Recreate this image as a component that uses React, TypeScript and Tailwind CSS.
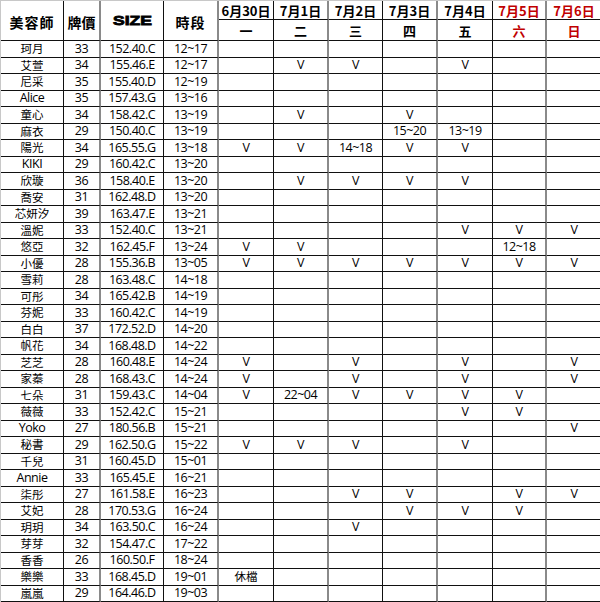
import React from "react";

type Row = [string, string, string, string, string[]];

const V = "V";
const rows: Row[] = [
  ["珂月", "33", "152.40.C", "12~17", ["", "", "", "", "", "", ""]],
  ["艾萱", "34", "155.46.E", "12~17", ["", V, V, "", V, "", ""]],
  ["尼采", "35", "155.40.D", "12~19", ["", "", "", "", "", "", ""]],
  ["Alice", "35", "157.43.G", "13~16", ["", "", "", "", "", "", ""]],
  ["童心", "34", "158.42.C", "13~19", ["", V, "", V, "", "", ""]],
  ["麻衣", "29", "150.40.C", "13~19", ["", "", "", "15~20", "13~19", "", ""]],
  ["陽光", "34", "165.55.G", "13~18", [V, V, "14~18", V, V, "", ""]],
  ["KIKI", "29", "160.42.C", "13~20", ["", "", "", "", "", "", ""]],
  ["欣璇", "36", "158.40.E", "13~20", ["", V, V, V, V, "", ""]],
  ["喬安", "31", "162.48.D", "13~20", ["", "", "", "", "", "", ""]],
  ["芯妍汐", "39", "163.47.E", "13~21", ["", "", "", "", "", "", ""]],
  ["溫妮", "33", "152.40.C", "13~21", ["", "", "", "", V, V, V]],
  ["悠亞", "32", "162.45.F", "13~24", [V, V, "", "", "", "12~18", ""]],
  ["小優", "28", "155.36.B", "13~05", [V, V, V, V, V, V, V]],
  ["雪莉", "28", "163.48.C", "14~18", ["", "", "", "", "", "", ""]],
  ["可彤", "34", "165.42.B", "14~19", ["", "", "", "", "", "", ""]],
  ["芬妮", "33", "160.42.C", "14~19", ["", "", "", "", "", "", ""]],
  ["白白", "37", "172.52.D", "14~20", ["", "", "", "", "", "", ""]],
  ["帆花", "34", "168.48.D", "14~22", ["", "", "", "", "", "", ""]],
  ["芝芝", "28", "160.48.E", "14~24", [V, "", V, "", V, "", V]],
  ["家蓁", "28", "168.43.C", "14~24", [V, "", V, "", V, "", V]],
  ["七朵", "31", "159.43.C", "14~04", [V, "22~04", V, V, V, V, ""]],
  ["薇薇", "33", "152.42.C", "15~21", ["", "", "", "", V, V, ""]],
  ["Yoko", "27", "180.56.B", "15~21", ["", "", "", "", "", "", V]],
  ["秘書", "29", "162.50.G", "15~22", [V, V, V, "", V, "", ""]],
  ["千兒", "31", "160.45.D", "15~01", ["", "", "", "", "", "", ""]],
  ["Annie", "33", "165.45.E", "16~21", ["", "", "", "", "", "", ""]],
  ["柒彤", "27", "161.58.E", "16~23", ["", "", V, V, "", V, V]],
  ["艾妃", "28", "170.53.G", "16~24", ["", "", "", V, V, V, ""]],
  ["玥玥", "34", "163.50.C", "16~24", ["", "", V, "", "", "", ""]],
  ["芽芽", "32", "154.47.C", "17~22", ["", "", "", "", "", "", ""]],
  ["香香", "26", "160.50.F", "18~24", ["", "", "", "", "", "", ""]],
  ["樂樂", "33", "168.45.D", "19~01", ["休檔", "", "", "", "", "", ""]],
  ["嵐嵐", "29", "164.46.D", "19~03", ["", "", "", "", "", "", ""]],
];

const dates = ["6月30日", "7月1日", "7月2日", "7月3日", "7月4日", "7月5日", "7月6日"];
const days = ["一", "二", "三", "四", "五", "六", "日"];

const rb = (i: number) => {
  if (i === 10) return "";
  if (i === 1 || i === 3 || i === 5 || i === 7 || i === 9) return "border-r-2 border-r-[#8a8a8a]";
  return "border-r border-r-[#111]";
};

const body = "font-['Open_Sans','Noto_Sans_CJK_TC',sans-serif] text-[12.5px] tracking-[-0.5px] text-black leading-none";
const cjk = "font-['Noto_Sans_CJK_TC',sans-serif] text-[11.5px] text-black leading-none";
const head = "font-['Noto_Sans_CJK_TC',serif] font-bold text-[14px] text-black leading-none";

export default function App() {
  return (
    <div className="w-[600px] h-[602px] bg-white overflow-hidden">
      <div className="grid grid-cols-[63px_37px_63px_55px_55px_55px_54px_55px_55px_54px_54px] grid-rows-[19px_21px_repeat(34,16.5px)] border-t border-l border-[#c8c8c8] w-[600px]">
        <div className={`row-span-2 flex items-center justify-center border-b border-b-[#111] ${rb(0)} ${head} tracking-[1px] pt-[3px]`}>美容師</div>
        <div className={`row-span-2 flex items-center justify-center border-b border-b-[#111] ${rb(1)} ${head} pt-[3px]`}>牌價</div>
        <div className={`row-span-2 flex items-center justify-center border-b border-b-[#111] ${rb(2)}`}>
          <span className="font-['Liberation_Sans',sans-serif] font-black text-[13px] leading-none inline-block scale-x-[1.35] [-webkit-text-stroke:0.8px_black]">SIZE</span>
        </div>
        <div className={`row-span-2 flex items-center justify-center border-b border-b-[#111] ${rb(3)} ${head} tracking-[1px] pt-[3px]`}>時段</div>
        {dates.map((d, i) => (
          <div
            key={d}
            className={`flex items-center justify-center border-b border-b-[#111] ${rb(4 + i)} font-['Noto_Sans_CJK_TC',sans-serif] font-bold text-[13px] leading-none ${i >= 5 ? "text-[#c00000]" : "text-black"}`}
          >
            {d}
          </div>
        ))}
        {days.map((d, i) => (
          <div
            key={d}
            className={`flex items-center justify-center border-b border-b-[#111] ${rb(4 + i)} font-['Noto_Sans_CJK_TC',serif] font-bold text-[13px] leading-none ${i >= 5 ? "text-[#c00000]" : "text-black"}`}
          >
            {d}
          </div>
        ))}
        {rows.map((r) => (
          <React.Fragment key={r[0]}>
            <div className={`flex items-center justify-center border-b border-b-[#111] ${rb(0)} ${/^[A-Za-z]/.test(r[0]) ? body : cjk}`}>{r[0]}</div>
            <div className={`flex items-center justify-center border-b border-b-[#111] ${rb(1)} ${body}`}>{r[1]}</div>
            <div className={`flex items-center justify-center border-b border-b-[#111] ${rb(2)} ${body}`}>{r[2]}</div>
            <div className={`flex items-center justify-center border-b border-b-[#111] ${rb(3)} ${body}`}>{r[3]}</div>
            {r[4].map((c, i) => (
              <div key={i} className={`flex items-center justify-center border-b border-b-[#111] ${rb(4 + i)} ${c === "休檔" ? cjk : body}`}>{c}</div>
            ))}
          </React.Fragment>
        ))}
      </div>
    </div>
  );
}
